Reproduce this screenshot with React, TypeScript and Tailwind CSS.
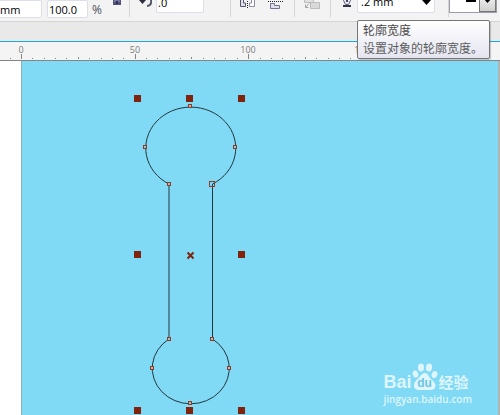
import { clsx } from 'clsx';

// Ruler: 50 mm every 114px, a tick every 10th part in between.
const RULER_ORIGIN = 21;
const PX_PER_STEP = 11.36;
const STEPS = 42;

const handles = [
  [134, 95], [186, 95], [238, 95],
  [134, 251], [238, 251],
  [134, 407], [186, 407], [238, 407],
];

const nodes = [
  [188, 104], [143, 145], [233, 145], [167, 182],
  [167, 337], [210, 337], [150, 366], [227, 366], [188, 401],
];

function Divider({ className }: { className?: string }) {
  return <span aria-hidden="true" className={clsx('mb-1 h-8 w-px shrink-0 bg-[#d6d6d6]', className)} />;
}

function ArrowDown({ className }: { className?: string }) {
  return (
    <svg aria-hidden="true" viewBox="0 0 9 8" className={clsx('h-2 w-[9px]', className)} fill="#000">
      <path d="M3 0h3v3h3L4.5 8 0 3h3z" />
    </svg>
  );
}

function Toolbar() {
  return (
    <header className="h-[22px] overflow-hidden border-b border-[#d4d4d4] bg-[#f3f3f3]">
      <div role="toolbar" aria-label="Properties" className="flex h-full items-end">
        <input
          aria-label="Object size"
          defaultValue="mm"
          className="mb-[3px] h-[18px] w-[42px] shrink-0 rounded-xs border border-l-0 border-[#dcdfea] bg-white text-[11px] text-black outline-none"
        />
        <input
          aria-label="Scale factor"
          defaultValue="100.0"
          className="mb-[3px] ml-[5px] h-[18px] w-[41px] shrink-0 rounded-xs border border-[#dcdfea] bg-white pl-px text-[11px] text-black outline-none"
        />
        <span className="mb-[3px] ml-1 w-[10px] text-xs leading-4 text-[#4d5060]">%</span>
        <button type="button" aria-label="Lock ratio" className="mb-4 ml-[11px] h-3 w-2 shrink-0">
          <svg viewBox="0 0 8 12" className="h-3 w-2">
            <path d="M2 7V3.500a2 2 0 0 1 4 0V7" fill="none" stroke="#57597e" />
            <path d="M0 6h8v6H0z" fill="#50527c" />
            <path d="M1 7h6v2H1z" fill="#7477a0" />
            <path d="M3 8h2v3H3z" fill="#2f3058" />
          </svg>
        </button>
        <Divider className="ml-2" />
        <label htmlFor="rotation" className="mb-[14px] ml-[9px] h-3 w-[13px] shrink-0" aria-label="Angle of rotation">
          <svg viewBox="0 0 13 12" className="h-3 w-[13px]" fill="none">
            <path d="M3.500 5A4.500 4.500 0 1 1 8 11" stroke="#55566a" strokeWidth="2" />
            <path d="M0 5h7L3.500 9z" fill="#2e2e3c" />
          </svg>
        </label>
        <input
          id="rotation"
          defaultValue=".0"
          className="mb-2 ml-1 h-[22px] w-12 shrink-0 rounded-xs border border-[#dcdfea] bg-white pl-px text-[11px] text-black outline-none"
        />
        <span className="mb-3 ml-[7px] w-1 text-xs leading-4 text-[#5d6070]">°</span>
        <Divider className="ml-[15px]" />
        <button type="button" aria-label="Mirror horizontally" className="mb-3 ml-[9px] h-[14px] w-[15px] shrink-0">
          <svg viewBox="0 0 15 14" className="h-[14px] w-[15px]" fill="none">
            <path d="M.5 3v8.500H5.500V8H3.500V3z" fill="#dfe0ec" stroke="#55566f" />
            <path d="M14.500 3v8.500H9.500V8h2V3z" fill="#fff" stroke="#8d8ea6" />
            <path d="M7.500 0v14" stroke="#222" strokeDasharray="1 1" />
          </svg>
        </button>
        <button type="button" aria-label="Mirror vertically" className="mb-3 ml-[13px] h-[14px] w-[15px] shrink-0">
          <svg viewBox="0 0 15 14" className="h-[14px] w-[15px]" fill="none">
            <path d="M0 6.500h15" stroke="#222" strokeDasharray="1 1" />
            <path d="M2.500 8.500h4v2h5v3h-9z" fill="#dfe0ec" stroke="#74758e" />
            <path d="M2.500 4.500h9v-3h-5" stroke="#74758e" />
          </svg>
        </button>
        <Divider className="ml-[11px]" />
        <button type="button" disabled aria-label="Order" className="mb-3 ml-[9px] h-[14px] w-[17px] shrink-0">
          <svg viewBox="0 0 17 14" className="h-[14px] w-[17px]" fill="#d9d9d9" stroke="#bcbcbc">
            <path d="M6.500 7.500h9v6h-9z" />
            <path d="M.5 1.500h9v6h-9z" fill="#e2e2e2" />
            <path d="M5 8.500 1.500 12.500M1.500 9.500v3h3" fill="none" stroke="#a6a6a6" />
          </svg>
        </button>
        <Divider className="ml-[9px]" />
        <label htmlFor="outline-width" className="mb-[14px] ml-[11px] h-3 w-[10px] shrink-0" aria-label="Outline width">
          <svg viewBox="0 0 10 12" className="h-3 w-[10px]" fill="none">
            <path d="M5 1 1.500 5.500 3.500 9.500h3l2-4z" fill="#e6e7f0" stroke="#62647b" />
            <path d="M4 5h2v2H4z" fill="#4a4c66" />
            <path d="M1 10h8v2H1z" fill="#33344c" />
          </svg>
        </label>
        <div className="relative mb-2 ml-[5px] w-[78px] shrink-0">
          <select
            id="outline-width"
            defaultValue=".2 mm"
            className="block h-[22px] w-full appearance-none rounded-xs border border-[#dcdfea] bg-white pl-[3px] text-[11px] text-black outline-none"
          >
            <option>.2 mm</option>
            <option>.5 mm</option>
            <option>1.0 mm</option>
          </select>
          <ArrowDown className="pointer-events-none absolute right-1 bottom-2" />
        </div>
        <Divider className="ml-[13px]" />
        <button
          type="button"
          aria-label="Line style"
          className="mb-2 flex h-5 w-12 shrink-0 items-end justify-end border border-[#9a9ca8] bg-white"
        >
          <span className="mr-[3px] mb-[10px] h-1 w-[10px] bg-black" />
          <span className="flex h-full w-[17px] items-end justify-center border border-[#777] bg-linear-to-b from-[#f5f5f5] to-[#cfcfcf] pb-2">
            <ArrowDown />
          </span>
        </button>
      </div>
    </header>
  );
}

function Ruler() {
  return (
    <svg
      role="img"
      aria-label="Horizontal ruler"
      className="block h-5 w-full border-t border-b border-t-[#14a9e8] border-b-[#858585] bg-[#f4f4f4]"
    >
      {Array.from({ length: STEPS + 1 }, (_, i) => {
        const x = Math.round(RULER_ORIGIN + (i - 1) * PX_PER_STEP);
        const step = i - 1;
        const height = step % 10 === 0 ? 5 : step % 5 === 0 ? 2 : 1;
        return <rect key={i} x={x} y={17 - height} width="1" height={height} fill="#858585" />;
      })}
      {[0, 50, 100, 150].map((mm) => (
        <text
          key={mm}
          x={Math.round(RULER_ORIGIN + (mm / 5) * PX_PER_STEP)}
          y="11"
          textAnchor="middle"
          fontSize="9"
          fill="#7c7c7c"
        >
          {mm}
        </text>
      ))}
    </svg>
  );
}

function Drawing() {
  return (
    <svg
      role="img"
      aria-label="Selected outline"
      viewBox="22 61 476 354"
      className="h-[354px] w-[476px] shrink-0"
    >
      <path
        d="M169 184A45 41 0 1 1 212.500 184V339A38.500 35.500 0 1 1 169 339Z"
        fill="none"
        stroke="#25363c"
      />
      <g fill="#80230c" shapeRendering="crispEdges">
        {handles.map(([x, y]) => (
          <rect key={`${x}-${y}`} x={x} y={y} width="7" height="7" />
        ))}
      </g>
      <g fill="#9bc3cc" stroke="#943a22" shapeRendering="crispEdges">
        {nodes.map(([x, y]) => (
          <rect key={`${x}-${y}`} x={x + 0.5} y={y + 0.5} width="3" height="3" />
        ))}
        <rect x="209.500" y="181.500" width="5" height="5" fill="none" />
      </g>
      <path d="M187.500 252.500l6 6M193.500 252.500l-6 6" stroke="#80230c" strokeWidth="2" />
    </svg>
  );
}

function Watermark() {
  return (
    <div className="pointer-events-none absolute right-[26px] bottom-2 text-white/75">
      <div className="flex items-end">
        <span className="font-['Liberation_Sans'] text-lg leading-[18px] font-bold">Bai</span>
        <span className="relative flex h-7 w-[26px] items-end justify-center">
          <svg aria-hidden="true" viewBox="0 0 26 28" className="absolute inset-0 h-7 w-[26px]" fill="currentColor">
            <ellipse cx="3.500" cy="11" rx="2.800" ry="3.600" transform="rotate(-15 3.500 11)" />
            <ellipse cx="9" cy="4.500" rx="3" ry="4" />
            <ellipse cx="17" cy="4.500" rx="3" ry="4" transform="rotate(8 17 4.500)" />
            <ellipse cx="22.500" cy="11.500" rx="2.800" ry="3.600" transform="rotate(15 22.500 11.500)" />
            <path d="M13 10c-3 0-4 2.500-6 4.500S2 19 2 22.500 4.500 27 7.500 27h11c3 0 5-1.500 5-4.500s-3-5-5-7S16 10 13 10z" />
          </svg>
          <span className="relative mb-0.5 font-['Liberation_Sans'] text-xs leading-3 font-bold text-[#6cc5e2]">du</span>
        </span>
        <span className="ml-px text-[15px] leading-[18px] font-bold">经验</span>
      </div>
      <p className="text-[10px] leading-4 font-semibold">jingyan.baidu.com</p>
    </div>
  );
}

function Tooltip() {
  return (
    <div
      role="tooltip"
      className="absolute top-5 right-[10px] z-10 w-[133px] rounded-xs border border-[#767676] bg-linear-to-b from-white to-[#e4e5f0] pt-px pl-[5px] text-xs leading-[18px] whitespace-nowrap shadow-[1px_1px_1px_#0003]"
    >
      <p className="text-[#4a4a4a]">轮廓宽度</p>
      <p className="text-[#5c5c5c]">设置对象的轮廓宽度。</p>
    </div>
  );
}

export default function App() {
  return (
    <div className="relative flex min-h-screen flex-col overflow-hidden bg-white font-['Open_Sans','Noto_Sans_CJK_SC',sans-serif]">
      <Toolbar />
      <div className="h-[19px] bg-[#e9e9e9]" />
      <Ruler />
      <main className="flex flex-1">
        <div className="w-[21px] shrink-0 bg-white" />
        <div className="relative flex min-w-0 flex-1 overflow-hidden border-r-2 border-l border-r-[#b3b3b3] border-l-[#8fb0bb] bg-[#80daf6]">
          <Drawing />
          <Watermark />
        </div>
      </main>
      <Tooltip />
    </div>
  );
}
